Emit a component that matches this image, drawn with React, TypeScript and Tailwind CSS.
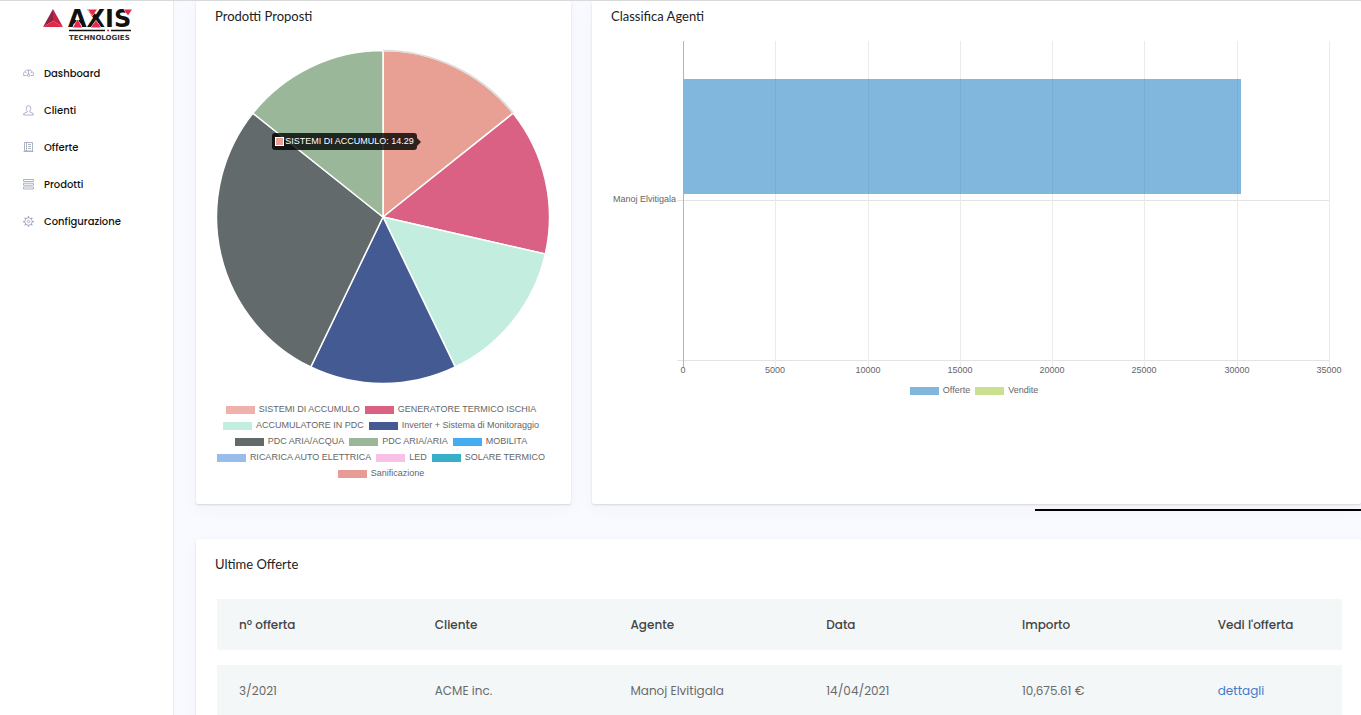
import type { ReactNode } from "react";

interface Series {
  label: string;
  color: string;
}

interface Slice extends Series {
  value: number;
}

const slices: Slice[] = [
  { label: "SISTEMI DI ACCUMULO", color: "#e7a093", value: 1 },
  { label: "GENERATORE TERMICO ISCHIA", color: "#da6184", value: 1 },
  { label: "ACCUMULATORE IN PDC", color: "#c3eedf", value: 1 },
  { label: "Inverter + Sistema di Monitoraggio", color: "#445a93", value: 1 },
  { label: "PDC ARIA/ACQUA", color: "#626a6c", value: 2 },
  { label: "PDC ARIA/ARIA", color: "#9ab899", value: 1 },
];

const pieLegend: Series[] = [
  { label: "SISTEMI DI ACCUMULO", color: "#eeb2aa" },
  ...slices.slice(1),
  { label: "MOBILITA", color: "#46acf1" },
  { label: "RICARICA AUTO ELETTRICA", color: "#98bdea" },
  { label: "LED", color: "#f8c2e8" },
  { label: "SOLARE TERMICO", color: "#38aec8" },
  { label: "Sanificazione", color: "#e89c98" },
];

const barLegend: Series[] = [
  { label: "Offerte", color: "#81b7dc" },
  { label: "Vendite", color: "#cce092" },
];

const offers = [
  {
    id: "3/2021",
    client: "ACME inc.",
    agent: "Manoj Elvitigala",
    date: "14/04/2021",
    amount: "10,675.61 €",
  },
];

const columns = ["nº offerta", "Cliente", "Agente", "Data", "Importo", "Vedi l'offerta"];

const NavIcon = ({ children }: { children: ReactNode }) => (
  <svg
    viewBox="0 0 22 22"
    className="w-[11px] h-[11px] shrink-0"
    fill="none"
    stroke="#a4abbd"
    strokeWidth="1.800"
    aria-hidden="true"
  >
    {children}
  </svg>
);

const navItems = [
  {
    label: "Dashboard",
    icon: (
      <NavIcon>
        <path d="M7 15H1v-2a10 9 0 0 1 20 0v2h-6M11 4v4M4 8l3 2M18 8l-3 2M11 8v5" />
        <circle cx="11" cy="14.500" r="2.500" />
      </NavIcon>
    ),
  },
  {
    label: "Clienti",
    icon: (
      <NavIcon>
        <path d="M8.500 12C6.500 10 6.500 8 6.500 6a4.500 4.500 0 0 1 9 0c0 2 0 4-2 6v2l7 3v3h-19v-3l7-3z" />
      </NavIcon>
    ),
  },
  {
    label: "Offerte",
    icon: (
      <NavIcon>
        <path d="M3 1h16v17H3zM7 1v17M10 5h6M10 9h6M10 13h6M1 19h20" />
      </NavIcon>
    ),
  },
  {
    label: "Prodotti",
    icon: (
      <NavIcon>
        <path d="M1 1h20v4H1zM1 8.500h20v4H1zM1 16h20v4H1z" />
      </NavIcon>
    ),
  },
  {
    label: "Configurazione",
    icon: (
      <NavIcon>
        <circle cx="11" cy="11" r="7.500" />
        <circle cx="11" cy="11" r="2.500" />
        <path
          d="M11 0v4M11 18v4M0 11h4M18 11h4M3.200 3.200L6 6M16 16l2.800 2.800M3.200 18.800L6 16M16 6l2.800-2.800"
          strokeWidth="2.500"
        />
      </NavIcon>
    ),
  },
];

const Logo = () => (
  <svg
    viewBox="0 0 96 34"
    className="w-[96px] h-[34px] overflow-visible"
    role="img"
    aria-label="Axis Technologies"
  >
    <path d="M11 1 1 19 11 13z" fill="#8f2448" />
    <path d="M11 1 21 19 11 13z" fill="#c52345" />
    <path d="M1 19 11 13 21 19z" fill="#e22846" />
    <text x="26" y="19" fontFamily="DejaVu Sans" fontWeight="700" fontSize="24" fill="#111">
      AXIS
    </text>
    <g fill="#e8274b" stroke="#fff" strokeWidth="1" paintOrder="stroke">
      <path d="M31 19.500l4.500-8 4.500 8z" />
      <path d="M46 1.500h9l-4.500 6z" />
      <path d="M49 19.500l5-7 5 7z" />
      <path d="M82 1.500h8l-4 6z" />
    </g>
    <path d="M27 22.500h36M69 22.500h20" stroke="#111" strokeWidth="1.500" />
    <circle cx="66" cy="22.500" r="1" fill="#e8274b" />
    <text x="27" y="32" fontFamily="DejaVu Sans" fontWeight="700" fontSize="7" fill="#333">
      TECHNOLOGIES
    </text>
  </svg>
);

const Sidebar = () => (
  <aside className="w-[174px] shrink-0 bg-white border-r border-[#e8ebf5]">
    <a href="#" className="flex pl-[42px] pt-[7px]">
      <Logo />
    </a>
    <nav className="flex flex-col mt-[13px]">
      {navItems.map((item) => (
        <a
          key={item.label}
          href="#"
          className="flex items-center gap-[10px] h-[37px] pl-[23px] text-[10px] font-medium text-[#111]"
        >
          {item.icon}
          {item.label}
        </a>
      ))}
    </nav>
  </aside>
);

const Card = ({ title, children }: { title: string; children: ReactNode }) => (
  <section className="bg-white px-[19px] rounded-xs shadow-[0_1px_2px_rgba(60,60,90,0.18),0_6px_20px_rgba(60,60,110,0.03)]">
    <h2 className="font-['Lato'] text-[13px] leading-5 text-[#222]">{title}</h2>
    {children}
  </section>
);

const Legend = ({ items }: { items: Series[] }) => (
  <ul className="flex flex-wrap justify-center font-['Liberation_Sans'] text-[9px] leading-4 text-[#666]">
    {items.map((item) => (
      <li key={item.label} className="flex items-center gap-1 pr-[5px]">
        <span className="w-[29px] h-2 mt-0.5" style={{ backgroundColor: item.color }} />
        {item.label}
      </li>
    ))}
  </ul>
);

const PieChart = () => {
  const total = slices.reduce((sum, s) => sum + s.value, 0);
  const center = 167.5;
  const radius = 166;
  const point = (part: number) => {
    const angle = (part / total) * 2 * Math.PI;
    return `${center + radius * Math.sin(angle)} ${center - radius * Math.cos(angle)}`;
  };

  let start = 0;
  const paths = slices.map((slice) => {
    const end = start + slice.value;
    const d = `M${center} ${center}L${point(start)}A${radius} ${radius} 0 0 1 ${point(end)}Z`;
    start = end;
    return { d, color: slice.color };
  });

  return (
    <div className="relative">
      <svg viewBox="0 0 336 336" className="w-full" role="img" aria-label="Prodotti Proposti">
        {paths.map((p) => (
          <path key={p.color} d={p.d} fill={p.color} stroke="#fff" strokeWidth="1.500" />
        ))}
        <path
          d={`M${point(0)}A${radius} ${radius} 0 0 1 ${point(1)}`}
          fill="none"
          stroke="#dddddd"
          strokeWidth="1.500"
        />
      </svg>
      {/* Tooltip */}
      <div className="absolute left-[17%] top-[25%] flex items-center gap-px h-[17px] px-[3px] rounded-[3px] bg-black/80 font-['Liberation_Sans'] text-[9px] text-white whitespace-nowrap">
        <span className="w-[9px] h-[9px] border border-white bg-[#e7a093]" />
        SISTEMI DI ACCUMULO: 14.29
        <span className="absolute left-full border-y-4 border-l-4 border-y-transparent border-l-black/80" />
      </div>
    </div>
  );
};

const BarChart = () => {
  const ticks = [0, 5000, 10000, 15000, 20000, 25000, 30000, 35000];
  const left = 72;
  const width = 646;
  const x = (value: number) => left + Math.round((value / 35000) * width);

  return (
    <svg
      viewBox="0 0 731 337"
      className="w-full"
      role="img"
      aria-label="Classifica Agenti"
      fontFamily="Liberation Sans"
      fontSize="9"
      fill="#666"
    >
      <g shapeRendering="crispEdges">
        <path d={`M66 159.500H${left + width}M66 319.500H${left + width}`} stroke="#e3e3e3" />
        {ticks.map((tick) => (
          <path key={tick} d={`M${x(tick) + 0.5} 0V326`} stroke={tick === 0 ? "#b5b5b5" : "#ebebeb"} />
        ))}
        <rect x={left} y="38" width={x(30250) - left} height="115" fill="#81b7dc" />
        {ticks.slice(1, 7).map((tick) => (
          <path key={tick} d={`M${x(tick) + 0.5} 38V153`} stroke="#79aed3" />
        ))}
      </g>
      <text x="65" y="161" textAnchor="end">
        Manoj Elvitigala
      </text>
      {ticks.map((tick) => (
        <text key={tick} x={x(tick)} y="332" textAnchor="middle">
          {tick}
        </text>
      ))}
    </svg>
  );
};

const OffersTable = () => (
  <table className="w-full table-fixed border-separate border-spacing-x-0 border-spacing-y-[15px] text-xs text-left">
    <thead>
      <tr className="h-[51px] bg-[#f4f7f8] text-[#444]">
        {columns.map((column) => (
          <th key={column} className="w-[17.4%] last:w-[13%] pl-[22px] font-medium">
            {column}
          </th>
        ))}
      </tr>
    </thead>
    <tbody>
      {offers.map((offer) => (
        <tr key={offer.id} className="h-[51px] bg-[#f4f7f8] text-[#6a6a6a]">
          <td className="pl-[22px]">{offer.id}</td>
          <td className="pl-[22px]">{offer.client}</td>
          <td className="pl-[22px]">{offer.agent}</td>
          <td className="pl-[22px]">{offer.date}</td>
          <td className="pl-[22px]">{offer.amount}</td>
          <td className="pl-[22px]">
            <a href="#" className="text-[#3d7cc9]">
              dettagli
            </a>
          </td>
        </tr>
      ))}
    </tbody>
  </table>
);

export default function App() {
  return (
    <div className="flex h-screen overflow-hidden border-t border-[#d9d9d9] bg-[#f9faff] font-['Poppins','Inter',sans-serif]">
      <Sidebar />
      <main className="flex flex-col flex-1 min-w-0 pl-[22px]">
        <div className="grid grid-cols-[375fr_769fr] gap-x-[21px] *:pt-[5px]">
          <Card title="Prodotti Proposti">
            <div className="pt-[23px] pb-[23px]">
              <PieChart />
              <div className="pt-[15px]">
                <Legend items={pieLegend} />
              </div>
            </div>
          </Card>
          <Card title="Classifica Agenti">
            <div className="pt-[15px]">
              <BarChart />
              <div className="pt-1">
                <Legend items={barLegend} />
              </div>
            </div>
          </Card>
        </div>
        <div className="w-[28%] h-0.5 mt-[5px] mb-7 shrink-0 self-end bg-black" />
        <div className="*:pt-[15px]">
          <Card title="Ultime Offerte">
            <div className="pt-[10px] pl-0.5">
              <OffersTable />
            </div>
          </Card>
        </div>
      </main>
    </div>
  );
}
